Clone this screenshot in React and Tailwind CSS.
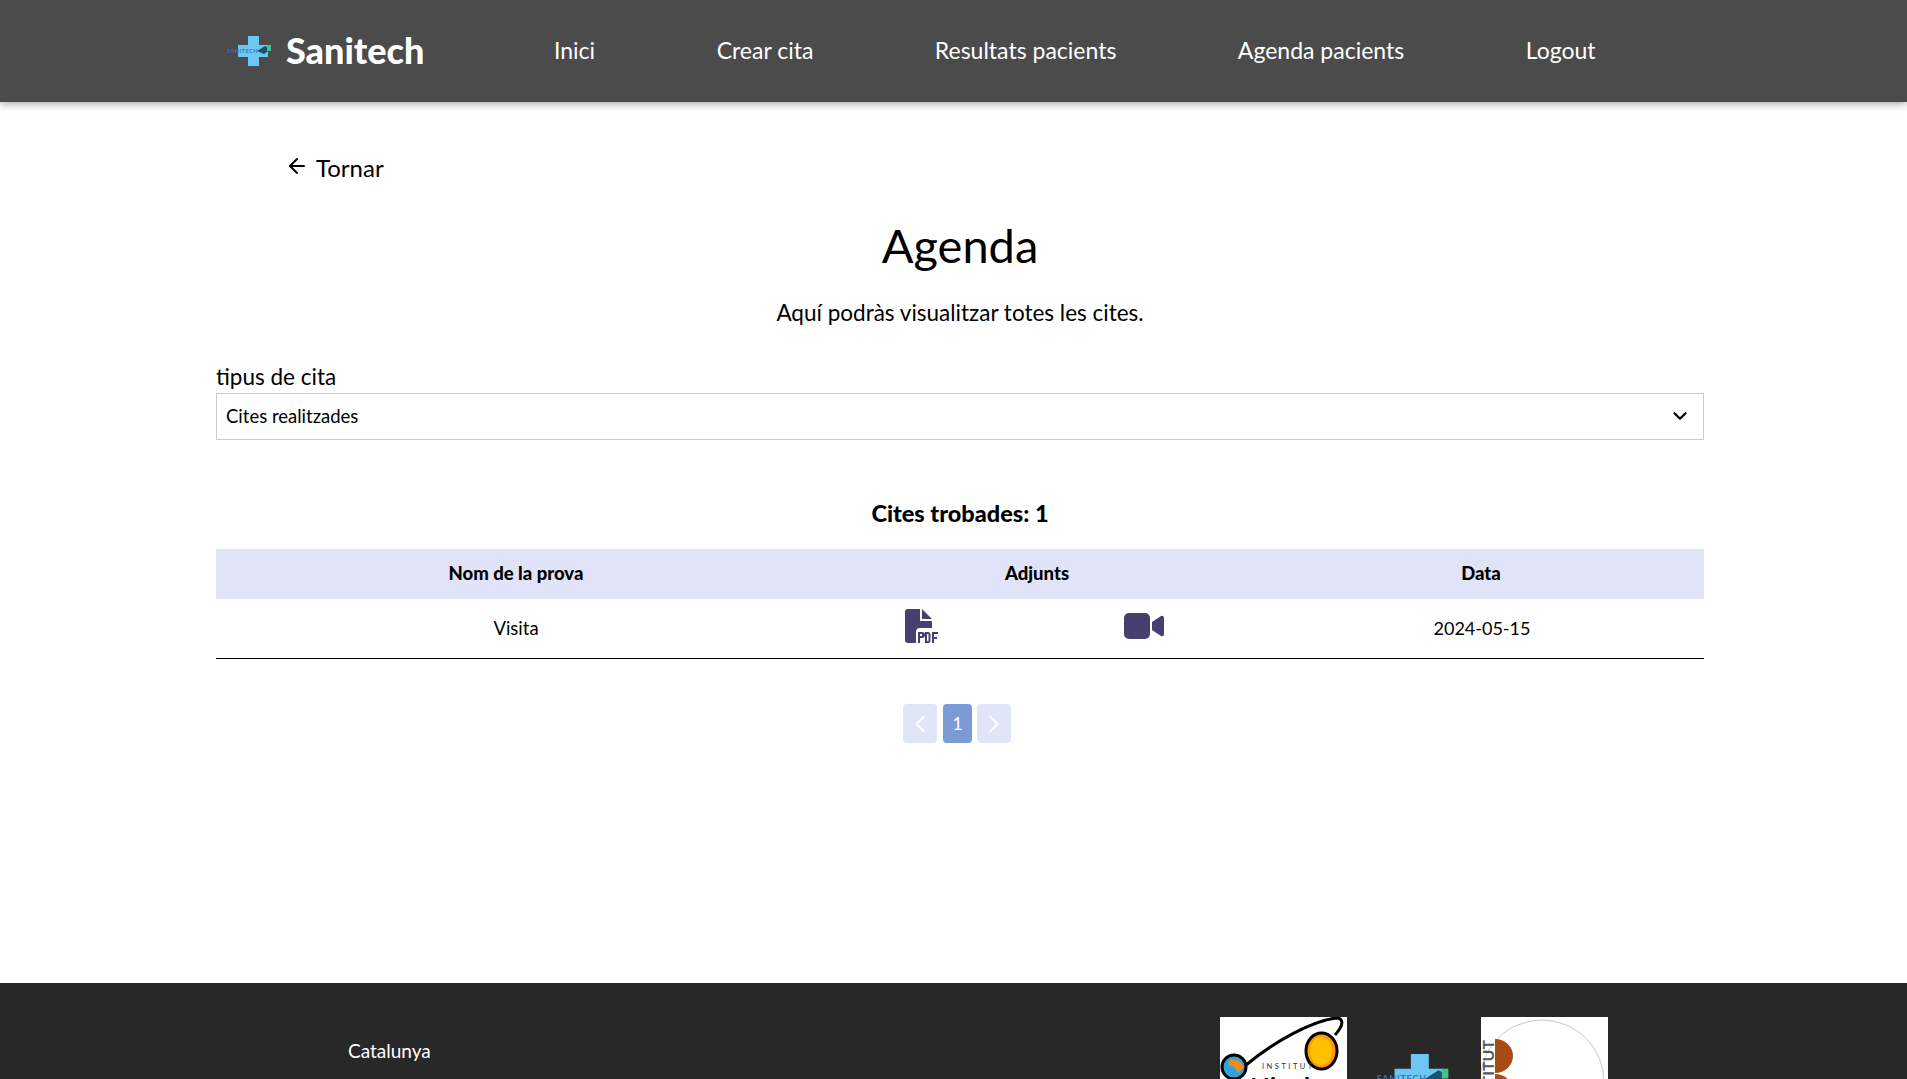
import { ArrowLeft, ChevronDown, ChevronLeft, ChevronRight } from "lucide-react";

const navLinks = ["Inici", "Crear cita", "Resultats pacients", "Agenda pacients", "Logout"];

function CrossLogo({ className }) {
    return (
        <svg viewBox="0 0 46 30" className={className}>
            <path d="M22 0h11v9h9v12h-9v9h-11v-9h-10v-12h10z" fill="#6cc8f2" />
            <text x="1" y="17" fontSize="5.500" fontWeight="700" letterSpacing="0.5" fill="#3f72b5" fontFamily="Lato, sans-serif">SANITECH</text>
            <path d="M31 15l8-5 6 3-7 5z" fill="#1d4f6e" />
            <path d="M41 9h4v6h-4z" fill="#3fc48c" />
        </svg>
    );
}

function PdfIcon() {
    return (
        <svg viewBox="0 0 34 34" className="w-[34px] h-[34px]" fill="#454070">
            <path d="M3 0h12v12h12v7h-12a4 4 0 0 0-4 4v11h-8a3 3 0 0 1-3-3v-28a3 3 0 0 1 3-3z" />
            <path d="M17 0l10 10h-10z" />
            <path fillRule="evenodd" d="M13 23h4a2 2 0 0 1 0 6h-2v5h-2zM15 25v2h2v-2z" />
            <path fillRule="evenodd" d="M20 23h3a2.500 2.500 0 0 1 2.500 2.500v6a2.500 2.500 0 0 1-2.500 2.500h-3zM22 25v7h1.500v-7z" />
            <path d="M27 23h6v2h-4v3h3v2h-3v4h-2z" />
        </svg>
    );
}

function VideoIcon() {
    return (
        <svg viewBox="0 0 40 26" className="w-10 h-[26px]" fill="#454070">
            <rect x="0" y="0" width="26" height="26" rx="5" />
            <path d="M28 9l9-6a2 2 0 0 1 3 1.500v17a2 2 0 0 1-3 1.500l-9-6z" />
        </svg>
    );
}

function App() {
    return (
        <div className="h-screen overflow-hidden flex flex-col bg-white text-black font-['Lato',sans-serif]">

            {/* Navbar */}

            <header className="h-[102px] shrink-0 bg-[#4b4b4b] shadow-[0_2px_8px_rgba(0,0,0,0.35)] flex items-center pl-[226px] relative z-10">

                <CrossLogo className="w-[46px] h-[30px]" />

                <span className="ml-[14px] w-[268px] text-[36px] font-black text-white leading-none -mt-[2px]">
                    Sanitech
                </span>

                <nav className="flex gap-[121.5px] text-[23px] text-white -mt-px">
                    {navLinks.map((link) => (
                        <a key={link} href="#">{link}</a>
                    ))}
                </nav>

            </header>

            {/* Content */}

            <main className="flex-1 pl-[216px] pr-[203px]">

                <a href="#" className="flex items-center gap-[7px] ml-[69px] mt-[52px] h-7 text-[24px]">
                    <ArrowLeft size={24} strokeWidth={2} className="-mt-1" />
                    Tornar
                </a>

                <h1 className="mt-[35px] text-center text-[47px] leading-[56px]">Agenda</h1>

                <p className="mt-[26px] text-center text-[22.500px] leading-7">
                    Aquí podràs visualitzar totes les cites.
                </p>

                <label className="block mt-[33px] text-[22.500px] leading-[33px]">tipus de cita</label>

                <div className="h-[47px] border border-[#cccccc] flex items-center justify-between pl-[9px] pr-[12px] text-[18.500px]">
                    Cites realitzades
                    <ChevronDown size={22} strokeWidth={2.5} className="-mt-px" />
                </div>

                <h2 className="mt-[59px] text-center text-[23.500px] font-black leading-7">Cites trobades: 1</h2>

                <div className="mt-[22px] border-b border-black">

                    <div className="h-[50px] bg-[#e1e4f8] grid grid-cols-[600px_442px_446px] items-center text-center text-[18.500px] font-black">
                        <span>Nom de la prova</span>
                        <span>Adjunts</span>
                        <span>Data</span>
                    </div>

                    <div className="h-[59px] grid grid-cols-[600px_212px_232px_444px] items-center text-center text-[18.500px]">
                        <span>Visita</span>
                        <span className="flex justify-center -mt-[5px]"><PdfIcon /></span>
                        <span className="flex justify-center -mt-[5px]"><VideoIcon /></span>
                        <span className="text-[18px] -mt-px">2024-05-15</span>
                    </div>

                </div>

                {/* Pagination */}

                <div className="mt-[45px] flex justify-center pr-[6px] text-white">
                    <span className="w-[34px] h-[39px] rounded-[4px] bg-[#e1e5f8] flex items-center justify-center">
                        <ChevronLeft size={28} strokeWidth={2} />
                    </span>
                    <span className="ml-[6px] w-[29px] h-[39px] rounded-[4px] bg-[#7b9bd6] flex items-center justify-center text-[18px]">
                        1
                    </span>
                    <span className="ml-[5px] w-[34px] h-[39px] rounded-[4px] bg-[#e1e5f8] flex items-center justify-center">
                        <ChevronRight size={28} strokeWidth={2} />
                    </span>
                </div>

            </main>

            {/* Footer */}

            <footer className="h-[96px] shrink-0 bg-[#282828] flex pl-[348px] overflow-hidden">

                <span className="mt-[58px] w-[872px] text-[19px] leading-5 text-white">Catalunya</span>

                <div className="mt-[34px] w-[127px] h-[127px] bg-white shrink-0">
                    <svg viewBox="0 0 127 127" className="w-full h-full">
                        <path d="M26 48C55 24 92 4 116 1c8 0 8 7-1 17" fill="none" stroke="#000" strokeWidth="3" />
                        <ellipse cx="101.500" cy="34" rx="15.500" ry="18" fill="#ff9a00" stroke="#000" strokeWidth="3" />
                        <ellipse cx="101" cy="34" rx="11" ry="14" fill="#ffc000" />
                        <circle cx="14" cy="50" r="12" fill="#2ba4e0" stroke="#000" strokeWidth="3" />
                        <path d="M10 42l10 2 4 6-6 6-4-6-6-2z" fill="#f08a24" />
                        <text x="42" y="52" fontSize="7.500" letterSpacing="2.500" fill="#333">INSTITUT</text>
                        <text x="30" y="80" fontSize="26" fontWeight="700" fill="#000">Nicolau</text>
                    </svg>
                </div>

                <div className="ml-[28px] w-[75px] mt-[71px] shrink-0">
                    <CrossLogo className="w-[75px] h-[49px]" />
                </div>

                <div className="ml-[31px] mt-[34px] w-[127px] h-[127px] bg-white shrink-0">
                    <svg viewBox="0 0 127 127" className="w-full h-full">
                        <circle cx="61" cy="65" r="62" fill="none" stroke="#c8c8c8" />
                        <path d="M14 22a18 17 0 0 1 0 34z" fill="#a84b14" />
                        <path d="M14 57a18 17 0 0 1 0 34z" fill="#a84b14" />
                        <text x="0" y="0" textAnchor="end" transform="translate(13 23) rotate(-90)" fontSize="16" fontWeight="700" fill="#555">INSTITUT</text>
                    </svg>
                </div>

            </footer>

        </div>
    );
}

export default App;
